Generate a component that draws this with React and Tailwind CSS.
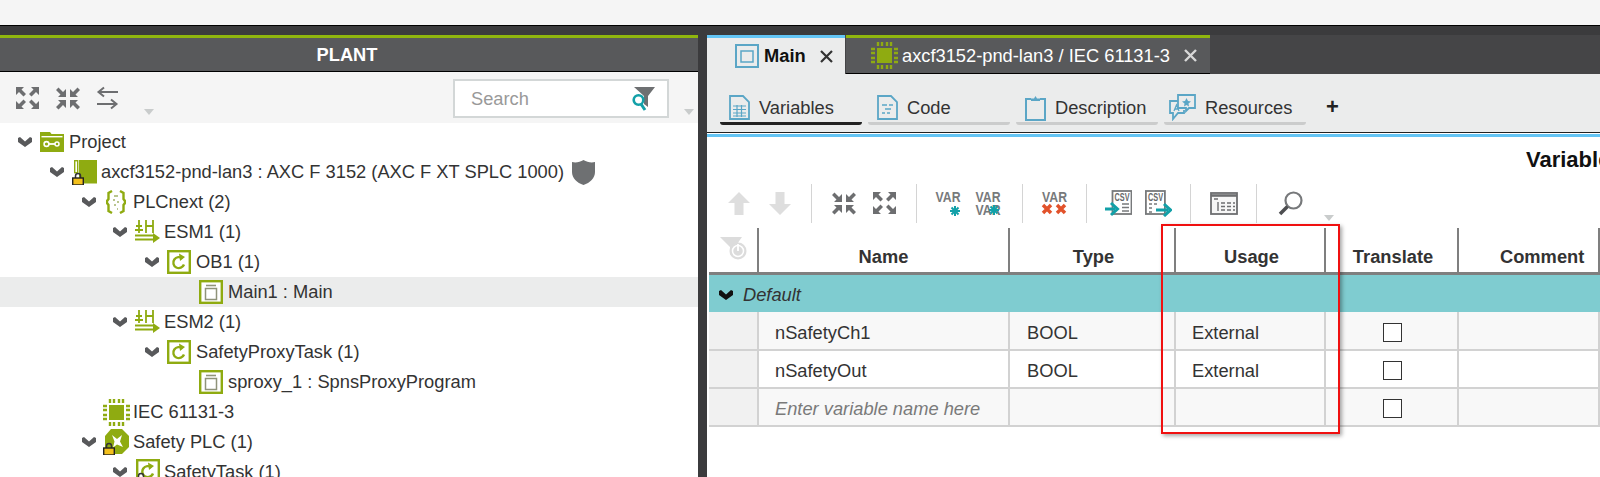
import React from "react";

const G = "#8fab11";
const B = "#5ba6c6";
const T = "#12a0a8";
const D = "#6d6e70";

const Chevron = ({ c = "#58595b" }) => (
  <svg width="14" height="10" viewBox="0 0 14 10"><path d="M0 1 2 0l5 4.500L12 0l2 1v4l-7 5-7-5z" fill={c} /></svg>
);
const Lock = ({ x = 0, y = 0 }) => (
  <g transform={`translate(${x} ${y})`}>
    <path d="M3.500 5V3a2.500 2.500 0 0 1 5 0v2" fill="none" stroke="#333" strokeWidth="1.500" />
    <rect x="0.700" y="5" width="10.600" height="7" fill="#f3c01c" stroke="#222" strokeWidth="1.400" />
  </g>
);
const FolderKey = () => (
  <svg width="24" height="20" viewBox="0 0 24 20">
    <path d="M0 0h10l1.500 2H24v18H0z" fill={G} />
    <rect x="1.500" y="4" width="21" height="1.400" fill="#fff" />
    <circle cx="6.500" cy="12" r="2.400" fill="none" stroke="#fff" strokeWidth="1.600" />
    <path d="M9 12h6" stroke="#fff" strokeWidth="1.800" />
    <circle cx="17" cy="12" r="2" fill="none" stroke="#fff" strokeWidth="1.500" />
  </svg>
);
const Device = () => (
  <svg width="25" height="25" viewBox="0 0 25 25">
    <rect x="2.700" y="0.700" width="3" height="12" fill="none" stroke={G} strokeWidth="1.400" />
    <rect x="7" y="0" width="18" height="23.500" fill={G} />
    <Lock x="0" y="13" />
  </svg>
);
const Braces = () => (
  <svg width="20" height="24" viewBox="0 0 20 24" fill="none">
    <path d="M6 1 2.500 3v6L1 11v2l1.500 2v6L6 23" stroke={G} strokeWidth="2.400" />
    <path d="M14 1l3.500 2v6L19 11v2l-1.500 2v6L14 23" stroke={G} strokeWidth="2.400" />
    <path d="M8 6h4M7 10h2M11 12h2M8 15h2M11 19h1" stroke="#a3b36a" strokeWidth="1.500" />
  </svg>
);
const Esm = () => (
  <svg width="26" height="24" viewBox="0 0 26 24" fill="none" stroke={G}>
    <path d="M2 6h6M1 10h8M5 0v13M12 0v13M19 0v13M12 6h7" strokeWidth="1.800" />
    <path d="M1 15.500h19M1 19.500h19" strokeWidth="2.200" />
    <path d="M19 13l7 5-7 5z" fill={G} stroke="none" />
  </svg>
);
const Task = () => (
  <svg width="24" height="24" viewBox="0 0 24 24" fill="none">
    <rect x="1.200" y="1.200" width="21.600" height="21.600" stroke={G} strokeWidth="2.400" fill="#fff" />
    <path d="M15.500 8.500a5.500 5.500 0 1 0 1.500 6" stroke={G} strokeWidth="2.400" />
    <path d="M12 3.500l6 3.500-5 4z" fill={G} />
  </svg>
);
const Program = () => (
  <svg width="24" height="24" viewBox="0 0 24 24" fill="none">
    <rect x="1.200" y="1.200" width="21.600" height="21.600" stroke={G} strokeWidth="2.400" fill="#fff" />
    <path d="M7 5.500h10" stroke="#8f937a" strokeWidth="1.600" />
    <rect x="6.500" y="8.500" width="11" height="11" stroke="#8f937a" strokeWidth="1.500" />
  </svg>
);
const Chip = ({ w = 27 }) => (
  <svg width={w} height={w} viewBox="0 0 27 27">
    <rect x="6" y="6" width="15" height="15" fill={G} />
    <path d="M7 0v4M11 0v4M16 0v4M20 0v4M7 23v4M11 23v4M16 23v4M20 23v4M0 7h4M0 11h4M0 16h4M0 20h4M23 7h4M23 11h4M23 16h4M23 20h4" stroke={G} strokeWidth="2.400" />
  </svg>
);
const Safety = () => (
  <svg width="26" height="26" viewBox="0 0 26 26">
    <path d="M8 0h11l7 7v11l-7 7H8l-6-6V7z" fill={G} />
    <path d="M9 6l5 4 5-4-2 6.500 3 5.500-6-2.500-4 3 1.500-6z" fill="#fff" />
    <Lock x="0" y="14" />
  </svg>
);
const SafetyTask = () => (
  <svg width="25" height="26" viewBox="0 0 25 26" fill="none">
    <rect x="2.200" y="1.200" width="21.600" height="21.600" stroke={G} strokeWidth="2.400" fill="#fff" />
    <path d="M16.500 8.500a5.500 5.500 0 1 0 1.500 6" stroke={G} strokeWidth="2.400" />
    <path d="M13 3.500l6 3.500-5 4z" fill={G} />
    <Lock x="0" y="14" />
  </svg>
);
const Shield = () => (
  <svg width="23" height="25" viewBox="0 0 23 25">
    <path d="M0 2c4 1 8 0 11.500-2C15 2 19 3 23 2v10c0 6-5 11-11.500 13C5 23 0 18 0 12z" fill="#6e7072" />
  </svg>
);

const Expand = ({ c = D }) => (
  <svg width="25" height="24" viewBox="0 0 25 24" fill={c}>
    <path d="M1 1h8L6.500 3.500 11 8 8.500 10.500 4 6 1 9zM24 1h-8l2.500 2.500L14 8l2.500 2.500L21 6l3 3zM1 23h8l-2.500-2.500L11 16l-2.500-2.500L4 18l-3-3zM24 23h-8l2.500-2.500L14 16l2.500-2.500L21 18l3-3z" />
  </svg>
);
const Collapse = ({ c = D }) => (
  <svg width="26" height="25" viewBox="0 0 26 25" fill={c}>
    <path d="M11 11H3l2.500-2.500L1 4l2.500-2.500L8 6l3-3zM15 11h8l-2.500-2.500L25 4l-2.500-2.500L18 6l-3-3zM11 14H3l2.500 2.500L1 21l2.500 2.500L8 19l3 3zM15 14h8l-2.500 2.500L25 21l-2.500 2.500L18 19l-3 3z" />
  </svg>
);
const Swap = () => (
  <svg width="24" height="24" viewBox="0 0 24 24" fill="none" stroke={D} strokeWidth="2">
    <path d="M22 6H3M8 1.500 2.500 6 8 10.500M1 18h19M15 13.500l5.500 4.500-5.500 4.500" />
  </svg>
);
const Tri = () => <div className="w-0 h-0 border-l-[5px] border-r-[5px] border-t-[6px] border-l-transparent border-r-transparent border-t-[#c9cccc]" />;

const FilterSearch = () => (
  <svg width="24" height="24" viewBox="0 0 24 24">
    <path d="M3 0h21l-7 9v11l-4-3V9z" fill="#6e7072" />
    <circle cx="7.500" cy="13" r="4.800" fill="none" stroke={T} strokeWidth="2.600" />
    <path d="M10 17l4 6" stroke={T} strokeWidth="3" />
  </svg>
);

const MainIcon = () => (
  <svg width="24" height="24" viewBox="0 0 24 24" fill="none" stroke={B}>
    <rect x="1" y="1" width="22" height="22" strokeWidth="2" />
    <rect x="6" y="7" width="12" height="11" strokeWidth="1.500" />
  </svg>
);
const VarDoc = () => (
  <svg width="21" height="25" viewBox="0 0 21 25" fill="none" stroke={B}>
    <path d="M1 1h13l6 6v17H1z" strokeWidth="1.800" />
    <path d="M4 11h13M4 14.500h13M4 18h13M4 21h13M8 10v12M12.500 10v12" strokeWidth="1.200" />
  </svg>
);
const CodeDoc = () => (
  <svg width="21" height="25" viewBox="0 0 21 25" fill="none" stroke={B}>
    <path d="M1 1h13l6 6v17H1z" strokeWidth="1.800" />
    <path d="M5 10h5M12 10h4M8 14h6M5 18h3M10 18h3" strokeWidth="1.500" />
  </svg>
);
const Clip = () => (
  <svg width="21" height="26" viewBox="0 0 21 26" fill="none" stroke={B}>
    <path d="M6 4H1v21h19V4h-5" strokeWidth="2" />
    <path d="M6 6V3.500h3L10.500 1 12 3.500h3V6z" fill={B} stroke="none" />
  </svg>
);
const Res = () => (
  <svg width="27" height="27" viewBox="0 0 27 27" fill="none" stroke={B} strokeWidth="1.800">
    <path d="M9 1h17v13h-6l-3 3v-3H9z" />
    <path d="M9 7H1v12h3v6l5-6h6v-3" />
    <path d="M17.500 4l1.500 3 3 .5-2.500 2 .5 3-2.500-1.500L15 12.500l.5-3-2.500-2 3-.5z" fill={B} stroke="none" />
    <path d="M5 17l2.500-6L10 17M6 15h3" strokeWidth="1.300" />
  </svg>
);

const Up = () => (
  <svg width="22" height="23" viewBox="0 0 22 23" fill="#dedede"><path d="M11 0l11 11h-6.500v12h-9V11H0z" /></svg>
);
const Down = () => (
  <svg width="22" height="23" viewBox="0 0 22 23" fill="#dedede"><path d="M11 23 0 12h6.500V0h9v12H22z" /></svg>
);
const Star = ({ x, y }) => (
  <g transform={`translate(${x} ${y})`} stroke={T} strokeWidth="2">
    <path d="M-5 0H5M0-5V5M-3.500-3.500l7 7M-3.500 3.500l7-7" />
  </g>
);
const VarText = ({ y = 11, x = 0.500 }) => (
  <text x={x} y={y} fontFamily="'Liberation Sans',Arial,sans-serif" fontWeight="700" fontSize="15" fill="#77797b" textLength="25" lengthAdjust="spacingAndGlyphs">VAR</text>
);
const VarNew = () => (
  <svg width="27" height="27" viewBox="0 0 27 27"><VarText y={12} /><Star x={20} y={21} /></svg>
);
const VarNew2 = () => (
  <svg width="26" height="27" viewBox="0 0 26 27"><VarText y={12} /><VarText y={25} /><Star x={19} y={20} /></svg>
);
const VarDel = () => (
  <svg width="27" height="27" viewBox="0 0 27 27">
    <VarText y={12} x={1} />
    <path d="M2 15l8 8M10 15l-8 8M16 15l8 8M24 15l-8 8" stroke="#e2522b" strokeWidth="3.500" />
  </svg>
);
const CsvLabel = ({ x }) => (
  <text x={x} y="11" fontFamily="'Liberation Sans',Arial,sans-serif" fontWeight="700" fontSize="10" fill="#66686a" textLength="15" lengthAdjust="spacingAndGlyphs">CSV</text>
);
const CsvIn = () => (
  <svg width="27" height="27" viewBox="0 0 27 27" fill="none">
    <rect x="7.500" y="1" width="19" height="23" fill="#fff" stroke="#77797b" strokeWidth="1.800" />
    <CsvLabel x={9.500} />
    <path d="M17 14h7M17 17.500h7M17 21h7" stroke="#77797b" strokeWidth="1.300" />
    <path d="M0 19h10M6 13l6.500 6L6 25" stroke={T} strokeWidth="3" />
  </svg>
);
const CsvOut = () => (
  <svg width="27" height="27" viewBox="0 0 27 27" fill="none">
    <rect x="0.900" y="1" width="19" height="23" fill="#fff" stroke="#77797b" strokeWidth="1.800" />
    <CsvLabel x={3} />
    <path d="M4 14h3M9 14h3M4 18h3M4 22h3" stroke="#77797b" strokeWidth="1.300" />
    <path d="M11 20h12M19 14l6.500 6-6.500 6" stroke={T} strokeWidth="3" />
  </svg>
);
const TableIcon = () => (
  <svg width="28" height="23" viewBox="0 0 28 23" fill="none" stroke="#6d6e70">
    <rect x="1" y="1" width="26" height="21" strokeWidth="1.800" fill="#f6f6f6" />
    <path d="M1 3.500h26" strokeWidth="2.600" />
    <path d="M4 7h4M8 10v9M11 11h4M17 11h4M23 11h2M11 14.500h4M17 14.500h4M23 14.500h2M11 18h4M17 18h4M23 18h2" strokeWidth="1.400" />
  </svg>
);
const Magnifier = () => (
  <svg width="25" height="25" viewBox="0 0 25 25" fill="none">
    <circle cx="15.500" cy="9.500" r="8" stroke="#77797b" strokeWidth="2.200" fill="#fff" />
    <path d="M9.500 15.500 2 23" stroke="#4d4e50" strokeWidth="3.600" />
  </svg>
);
const FilterPower = () => (
  <svg width="28" height="26" viewBox="0 0 28 26">
    <path d="M0 1h22l-7 10v11l-5-4v-7z" fill="#dcdcdc" />
    <circle cx="18" cy="15" r="8.500" fill="#dcdcdc" />
    <circle cx="18" cy="15" r="5.500" fill="none" stroke="#fff" strokeWidth="1.500" />
    <path d="M18 8v7" stroke="#fff" strokeWidth="1.800" />
  </svg>
);
const Sep = ({ cls }) => <div className={`w-px h-[39px] bg-[#d4d4d4] ${cls}`} />;

const rows = [
  { t: "Project", pl: "pl-[13px]", ic: <FolderKey /> },
  { t: "axcf3152-pnd-lan3 : AXC F 3152 (AXC F XT SPLC 1000)", pl: "pl-[45px]", ic: <Device />, after: true },
  { t: "PLCnext (2)", pl: "pl-[77px]", ic: <Braces /> },
  { t: "ESM1 (1)", pl: "pl-[108px]", ic: <Esm /> },
  { t: "OB1 (1)", pl: "pl-[140px]", ic: <Task /> },
  { t: "Main1 : Main", pl: "pl-[172px]", ic: <Program />, leaf: true, sel: true },
  { t: "ESM2 (1)", pl: "pl-[108px]", ic: <Esm /> },
  { t: "SafetyProxyTask (1)", pl: "pl-[140px]", ic: <Task /> },
  { t: "sproxy_1 : SpnsProxyProgram", pl: "pl-[172px]", ic: <Program />, leaf: true },
  { t: "IEC 61131-3", pl: "pl-[77px]", ic: <Chip />, leaf: true },
  { t: "Safety PLC (1)", pl: "pl-[77px]", ic: <Safety /> },
  { t: "SafetyTask (1)", pl: "pl-[108px]", ic: <SafetyTask /> },
];

const TreeRow = ({ r }) => (
  <div className={`h-[30px] shrink-0 flex items-center ${r.pl} ${r.sel ? "bg-[#ebecec]" : ""}`}>
    <div className="w-[24px] flex justify-center">{!r.leaf && <Chevron />}</div>
    <div className="w-[30px] flex justify-center items-center h-[30px]">{r.ic}</div>
    <span className="ml-[2px] whitespace-nowrap text-[18.3px] text-[#333]">{r.t}</span>
    {r.after && <div className="ml-[8px] flex"><Shield /></div>}
  </div>
);

const SubTab = ({ icon, label, active, iw }) => (
  <div className="w-[142px] mr-[6px] shrink-0 flex flex-col">
    <div className="h-[33px] flex items-center pl-[9px] pt-[4px]">
      <div className={`flex justify-center ${iw}`}>{icon}</div>
      <span className="text-[18.3px] text-[#333] whitespace-nowrap ml-[9px]">{label}</span>
    </div>
    <div className={`h-[3px] rounded-b-[3px] ${active ? "bg-[#222]" : "bg-[#cbcccc]"}`} />
  </div>
);

const Cell = ({ children, cls = "" }) => (
  <div className={`flex items-center pt-[4px] border-r-2 border-[#d2d2d2] text-[18.3px] whitespace-nowrap ${cls}`}>{children}</div>
);
const Check = () => <div className="w-[19px] h-[19px] ml-[1px] -mt-[1px] border border-[#333] bg-white" />;

const DataRow = ({ bg, name, type, usage, ph, h = "h-[38px]" }) => (
  <div className={`grid grid-cols-[50px_251px_166px_150px_133px_1fr] ${h} border-b-2 border-[#d2d2d2] text-[#333] ${bg}`}>
    <Cell cls="bg-[#f1f1f1]" />
    <Cell cls={`pl-[16px] ${ph ? "italic text-[#7a7a7a]" : "text-[#333]"}`}>{name}</Cell>
    <Cell cls="pl-[17px] text-[#333]">{type}</Cell>
    <Cell cls="pl-[16px] text-[#333]">{usage}</Cell>
    <Cell cls="justify-center"><Check /></Cell>
    <Cell cls="border-r-0" />
  </div>
);

const Head = ({ children, cls = "" }) => (
  <div className={`flex items-center border-r-2 border-[#7f7f7f] font-bold text-[18.3px] text-[#333] ${cls}`}>{children}</div>
);

export default function App() {
  return (
    <div className="w-[1600px] h-[477px] overflow-hidden flex flex-col bg-white font-['Liberation_Sans',Arial,sans-serif]">
      <div className="h-[25px] shrink-0 bg-[#f5f5f5]" />
      <div className="h-px shrink-0 bg-black" />
      <div className="h-[9px] shrink-0 bg-[#3b3b3d]" />
      <div className="flex flex-1 min-h-0">
        <div className="w-[698px] shrink-0 flex flex-col overflow-hidden">
          <div className="h-[3px] shrink-0 bg-[#8fb50e]" />
          <div className="h-[34px] shrink-0 bg-[#58595b] border-b border-black flex items-center justify-center pr-[4px] pt-[1px] font-bold text-[18.3px] text-white">PLANT</div>
          <div className="h-[51px] shrink-0 bg-[#f5f5f5] flex items-start">
            <div className="ml-[15px] mt-[14px]"><Expand /></div>
            <div className="ml-[15px] mt-[14px]"><Collapse /></div>
            <div className="ml-[15px] mt-[14px]"><Swap /></div>
            <div className="ml-[24px] mt-[37px]"><Tri /></div>
            <div className="ml-[299px] mt-[7px] w-[216px] h-[39px] bg-white border-2 border-[#d3d7d7] flex items-center pl-[16px] pr-[12px] justify-between">
              <span className="text-[18.3px] text-[#999]">Search</span>
              <FilterSearch />
            </div>
            <div className="ml-[15px] mt-[37px]"><Tri /></div>
          </div>
          <div className="flex flex-col pt-[4px]">
            {rows.map((r) => <TreeRow key={r.t} r={r} />)}
          </div>
        </div>
        <div className="w-[9px] shrink-0 bg-[#3b3b3d]" />
        <div className="flex-1 min-w-0 flex flex-col relative">
          <div className="h-[39px] shrink-0 flex bg-[#454547]">
            <div className="w-[138px] shrink-0 bg-[#ebecec] border-t-[3px] border-[#63c5f5] flex items-center pl-[28px]">
              <MainIcon />
              <span className="ml-[5px] font-bold text-[18.3px] text-[#111]">Main</span>
              <svg className="ml-[14px]" width="13" height="13" viewBox="0 0 13 13"><path d="M1 1l11 11M12 1 1 12" stroke="#333" strokeWidth="2.200" /></svg>
            </div>
            <div className="w-[364px] shrink-0 ml-px bg-[#58595b] border-t-[3px] border-[#8fb50e] border-b border-b-black flex items-center pl-[25px]">
              <Chip />
              <span className="ml-[4px] text-[18.3px] text-white whitespace-nowrap">axcf3152-pnd-lan3 / IEC 61131-3</span>
              <svg className="ml-[14px]" width="13" height="13" viewBox="0 0 13 13"><path d="M1 1l11 11M12 1 1 12" stroke="#d8d8d8" strokeWidth="2.400" /></svg>
            </div>
          </div>
          <div className="h-[59px] shrink-0 bg-[#ebecec] border-b border-[#222] flex items-start pl-[13px] pt-[15px]">
            <SubTab icon={<VarDoc />} label="Variables" active iw="w-[21px]" />
            <SubTab icon={<CodeDoc />} label="Code" iw="w-[21px]" />
            <SubTab icon={<Clip />} label="Description" iw="w-[21px]" />
            <SubTab icon={<Res />} label="Resources" iw="w-[27px] -ml-[4px]" />
            <span className="ml-[14px] mt-[3px] font-bold text-[22px] leading-[30px] text-[#222]">+</span>
          </div>
          <div className="h-px shrink-0 bg-white" />
          <div className="h-[3px] shrink-0 bg-[#63c5f5]" />
          <div className="h-[46px] shrink-0 pl-[819px] pt-[6px] font-bold text-[22px] text-[#111] whitespace-nowrap overflow-hidden">Variables</div>
          <div className="h-[40px] shrink-0 flex items-center">
            <div className="ml-[21px]"><Up /></div>
            <div className="ml-[19px]"><Down /></div>
            <Sep cls="ml-[20px]" />
            <div className="ml-[19px]"><Collapse /></div>
            <div className="ml-[15px]"><Expand /></div>
            <Sep cls="ml-[19px]" />
            <div className="ml-[18px]"><VarNew /></div>
            <div className="ml-[13px]"><VarNew2 /></div>
            <Sep cls="ml-[21px]" />
            <div className="ml-[18px]"><VarDel /></div>
            <Sep cls="ml-[18px]" />
            <div className="ml-[18px]"><CsvIn /></div>
            <div className="ml-[13px]"><CsvOut /></div>
            <Sep cls="ml-[18px]" />
            <div className="ml-[19px]"><TableIcon /></div>
            <Sep cls="ml-[18px]" />
            <div className="ml-[21px]"><Magnifier /></div>
            <div className="ml-[21px] mt-[30px]"><Tri /></div>
          </div>
          <div className="pl-[2px] flex flex-col pt-[5px]">
            <div className="grid grid-cols-[50px_251px_166px_150px_133px_1fr] h-[44px] bg-white">
              <Head cls="items-start pl-[11px] pt-[8px]"><FilterPower /></Head>
              <Head cls="justify-center pt-[13px]">Name</Head>
              <Head cls="justify-center pt-[13px] pl-[3px]">Type</Head>
              <Head cls="justify-center pt-[13px] pl-[3px]">Usage</Head>
              <Head cls="justify-center pt-[13px] pl-[3px]">Translate</Head>
              <Head cls="border-r-0 pl-[41px] pt-[13px]">Comment</Head>
            </div>
            <div className="h-[3px] bg-[#7f7f7f]" />
            <div className="h-[37px] bg-[#7fccd0] flex items-center pl-[10px] italic text-[18.3px] text-[#333] pt-[2px]">
              <Chevron c="#111" />
              <span className="ml-[10px]">Default</span>
            </div>
            <DataRow bg="bg-[#f8f8f8]" name="nSafetyCh1" type="BOOL" usage="External" h="h-[39px]" />
            <DataRow bg="bg-white" name="nSafetyOut" type="BOOL" usage="External" />
            <DataRow bg="bg-[#f8f8f8]" name="Enter variable name here" ph />
          </div>
          <div className="absolute left-[454px] top-[189px] w-[179px] h-[210px] border-2 border-[#f01010] shadow-[2px_2px_4px_rgba(0,0,0,0.35)] pointer-events-none" />
        </div>
      </div>
    </div>
  );
}
